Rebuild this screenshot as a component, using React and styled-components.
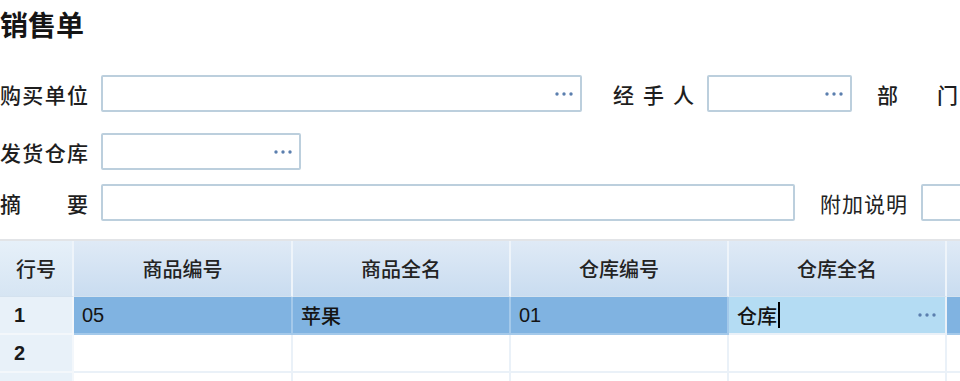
import styled, { createGlobalStyle } from "styled-components";

const GlobalStyle = createGlobalStyle`
    html, body {
        margin: 0;
        padding: 0;
        background: #ffffff;
        overflow: hidden;
    }
    body {
        font-family: "Noto Sans CJK SC", "Liberation Sans", sans-serif;
        color: #1c1c1c;
    }
`;

const columns = ["商品编号", "商品全名", "仓库编号", "仓库全名", ""];

const Dots = ({ color = "#5b7fae" }) => (
    <svg width="20" height="6" viewBox="0 0 20 6">
        <circle cx="3" cy="3" r="1.7" fill={color} />
        <circle cx="10" cy="3" r="1.7" fill={color} />
        <circle cx="17" cy="3" r="1.7" fill={color} />
    </svg>
);

const App = () => {
    return (
        <>
            <GlobalStyle />
            <Page>
                <Title>销售单</Title>

                <FormRow $top={30}>
                    <Label>购买单位</Label>
                    <Field $width={481}>
                        <Dots />
                    </Field>
                    <Label $gap={31} $width={81}>
                        经手人
                    </Label>
                    <Field $width={145}>
                        <Dots />
                    </Field>
                    <Label $gap={25} $width={81}>
                        部门
                    </Label>
                </FormRow>

                <FormRow $top={21}>
                    <Label>发货仓库</Label>
                    <Field $width={200}>
                        <Dots />
                    </Field>
                </FormRow>

                <FormRow $top={14}>
                    <Label>摘要</Label>
                    <Field $width={694} />
                    <SmallLabel>附加说明</SmallLabel>
                    <Field $width={60} />
                </FormRow>

                <Grid>
                    <HeadCell $num>行号</HeadCell>
                    {columns.map((c, i) => (
                        <HeadCell key={i}>{c}</HeadCell>
                    ))}

                    <NumCell>1</NumCell>
                    <Cell $selected>05</Cell>
                    <Cell $selected>苹果</Cell>
                    <Cell $selected>01</Cell>
                    <EditCell>
                        <span>
                            仓库
                            <Caret />
                        </span>
                        <Dots />
                    </EditCell>
                    <Cell $selected />

                    <NumCell>2</NumCell>
                    <Cell />
                    <Cell />
                    <Cell />
                    <Cell />
                    <Cell />

                    <NumCell />
                    <Cell />
                    <Cell />
                    <Cell />
                    <Cell />
                    <Cell />
                </Grid>
            </Page>
        </>
    );
};

const Page = styled.div`
    width: 960px;
    height: 381px;
    overflow: hidden;
    position: relative;
`;

const Title = styled.h1`
    margin: 0;
    padding-top: 7px;
    height: 38px;
    font-size: 28px;
    font-weight: 700;
    line-height: 34px;
    color: #151515;
`;

const FormRow = styled.div`
    display: flex;
    align-items: center;
    margin-top: ${(p) => p.$top}px;
    height: 37px;
    white-space: nowrap;
`;

const Label = styled.div`
    flex: none;
    width: ${(p) => p.$width || 88}px;
    margin-left: ${(p) => p.$gap || 0}px;
    margin-right: 13px;
    font-size: 21px;
    font-weight: 500;
    color: #1e1e1e;
    text-align: justify;
    text-align-last: justify;
`;

const SmallLabel = styled.div`
    flex: none;
    margin-left: 25px;
    margin-right: 13px;
    font-size: 21px;
    color: #222;
    letter-spacing: 1px;
`;

const Field = styled.div`
    flex: none;
    box-sizing: border-box;
    width: ${(p) => p.$width}px;
    height: 37px;
    border: 2px solid #bccfdd;
    border-radius: 2px;
    background: #fff;
    display: flex;
    align-items: center;
    justify-content: flex-end;
    padding-right: 6px;
`;

const Grid = styled.div`
    margin-top: 18px;
    display: grid;
    grid-template-columns: 74px 219px 218px 218px 218px 40px;
    grid-template-rows: 56px 38px 38px 38px;
    border-top: 2px solid #e2e4e7;
    font-size: 20px;
`;

const HeadCell = styled.div`
    display: flex;
    align-items: center;
    justify-content: center;
    background: ${(p) =>
        p.$num
            ? "linear-gradient(#e6f0f9, #d6e5f3)"
            : "linear-gradient(#dfeaf6, #c9dcf0)"};
    border-right: 2px solid #eef4fa;
    border-bottom: 1px solid #d4e2ef;
    font-weight: 500;
    color: #232323;
`;

const NumCell = styled.div`
    display: flex;
    align-items: center;
    padding-left: 14px;
    background: #e8f1f9;
    border-right: 2px solid #f3f7fb;
    border-bottom: 2px solid #f3f7fb;
    font-family: "Liberation Sans", sans-serif;
    font-weight: 700;
    color: #1a1a1a;
`;

const Cell = styled.div`
    display: flex;
    align-items: center;
    padding-left: 8px;
    background: ${(p) => (p.$selected ? "#80b3e1" : "#ffffff")};
    border-right: 2px solid ${(p) => (p.$selected ? "#a4c9ea" : "#eaf1f8")};
    border-bottom: 2px solid ${(p) => (p.$selected ? "#a4c9ea" : "#eaf1f8")};
    font-weight: 500;
    color: #141414;

    font-family: "Liberation Sans", "Noto Sans CJK SC", sans-serif;
`;

const EditCell = styled(Cell)`
    background: #b4dcf3;
    justify-content: space-between;
    padding-right: 8px;

    span {
        display: flex;
        align-items: center;
        font-family: "Noto Sans CJK SC", sans-serif;
    }
`;

const Caret = styled.i`
    display: inline-block;
    width: 2px;
    height: 26px;
    background: #000;
    margin-left: 1px;
`;

export default App;
